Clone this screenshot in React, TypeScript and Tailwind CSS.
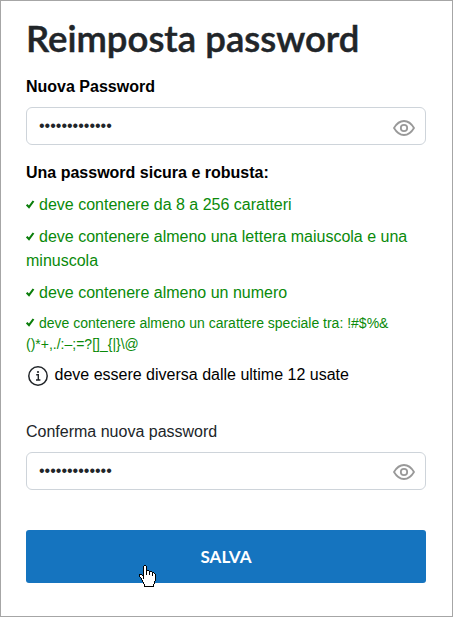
import { useState } from 'react';

const CURSOR_ROWS = [
  '.....XX..........',
  '....XooX.........',
  '....XooX.........',
  '....XooX.........',
  '....XooX.........',
  '....XooXXX.......',
  '....XooXooXXX....',
  '....XooXooXooXX..',
  '....XooXooXooXoX.',
  'XXX.XooXooXooXooX',
  'XooXXooooooooXooX',
  'XoooXoooooooooooX',
  '.XooXoooooooooooX',
  '..XoXoooooooooooX',
  '..XoooooooooooooX',
  '...XooooooooooooX',
  '...XoooooooooooX.',
  '....XooooooooooX.',
  '....XooooooooooX.',
  '.....XooooooooX..',
  '.....XooooooooX..',
  '.....XXXXXXXXXX..',
];

const HandCursor = () => (
  <svg width="17" height="22" viewBox="0 0 17 22" shapeRendering="crispEdges" className="pointer-events-none absolute top-[35px] left-[113px]">
    {CURSOR_ROWS.map((row, y) =>
      row.split('').map((c, x) => (c === '.' ? null : <rect key={`${x}-${y}`} x={x} y={y} width="1" height="1" fill={c === 'X' ? '#000' : '#fff'} />)),
    )}
  </svg>
);

const EyeIcon = () => (
  <svg width="22" height="16" viewBox="0 0 22 16" fill="none" stroke="#999" strokeWidth="1.8" strokeLinejoin="round">
    <path d="M1 8C3.6 3.6 7 1 11 1s7.400 2.600 10 7c-2.600 4.400-6 7-10 7S3.600 12.400 1 8Z" />
    <circle cx="11" cy="8" r="3.200" />
  </svg>
);

const CheckIcon = () => (
  <svg width="9" height="9" viewBox="0 0 9 9" fill="none" stroke="#0a7d0a" strokeWidth="2.100" className="mr-1 inline-block align-[1px]">
    <path d="M0.700 4.700 3 7.200 7.500 1" />
  </svg>
);

const InfoIcon = () => (
  <svg width="20" height="20" viewBox="0 0 20 20" fill="none" stroke="#212529" className="mt-[3px] mr-[6.5px] ml-[2px] shrink-0">
    <circle cx="10" cy="10" r="9.200" strokeWidth="1.500" />
    <path d="M8.200 8.700h2.100V14M8 14h4.400" strokeWidth="1.400" />
    <circle cx="10" cy="6" r="1.100" fill="#212529" stroke="none" />
  </svg>
);

const PasswordField = ({ id }: { id: string }) => {
  const [visible, setVisible] = useState(false);
  return (
    <div className="flex h-[38px] items-center rounded-md border border-[#ced4da] pr-[10px] pl-3">
      <input
        id={id}
        type={visible ? 'text' : 'password'}
        defaultValue="Password.2024"
        className="h-6 min-w-0 flex-1 pb-px text-base text-[#212529] outline-none"
      />
      <button type="button" aria-label="Mostra password" className={id === 'confirm' ? 'mt-px' : 'mt-[3px]'} onClick={() => setVisible(!visible)}>
        <EyeIcon />
      </button>
    </div>
  );
};

const RULES = [
  { text: 'deve contenere da 8 a 256 caratteri' },
  { text: 'deve contenere almeno una lettera maiuscola e una minuscola' },
  { text: 'deve contenere almeno un numero' },
  { text: 'deve contenere almeno un carattere speciale tra: !#$%& ()*+,./:–;=?[]_{|}\\@', small: true },
];

export default function App() {
  return (
    <form className="h-[617px] w-[453px] border border-[#a6a6a6] bg-white pt-[15px] pr-[26px] pl-[25px] font-['Liberation_Sans',Arial,sans-serif] text-base text-black">
      <h1 className="h-[59px] font-[Lato,sans-serif] text-[36.6px] leading-[44px] font-semibold whitespace-nowrap text-[#212529] [-webkit-text-stroke:0.5px_#212529]">Reimposta password</h1>

      <label htmlFor="new" className="mb-2 block font-bold">Nuova Password</label>
      <PasswordField id="new" />

      <p className="mt-4 font-bold">Una password sicura e robusta:</p>
      <ul className="mt-2 space-y-2 text-[#0a8a0a]">
        {RULES.map((rule) => (
          <li key={rule.text} className={rule.small ? 'text-sm leading-[21px]' : ''}>
            <CheckIcon />{rule.text}
          </li>
        ))}
        <li className="flex h-6 text-black">
          <InfoIcon />
          deve essere diversa dalle ultime 12 usate
        </li>
      </ul>

      <label htmlFor="confirm" className="mt-[33px] mb-2 block text-[#212529]">Conferma nuova password</label>
      <PasswordField id="confirm" />

      <div className="relative mt-10">
        <button type="button" className="h-[53px] w-full rounded-[3px] bg-[#1574bf] font-[Lato,sans-serif] text-[17px] font-bold text-white">SALVA</button>
        <HandCursor />
      </div>
    </form>
  );
}
